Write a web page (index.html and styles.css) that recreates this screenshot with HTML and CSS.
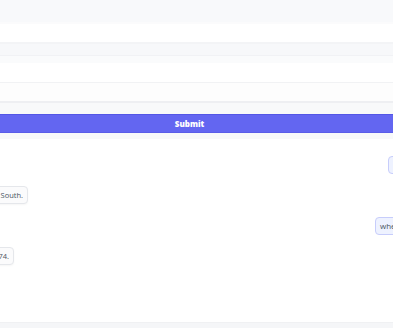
FILE: index.html
```html
<!DOCTYPE html>
<html>
<head>
<meta charset="utf-8">
<link rel="stylesheet" href="styles.css">
</head>
<body>
<div class="page">
  <div class="header"></div>
  <div class="field field-a"></div>
  <div class="band band-a"></div>
  <div class="band band-b"></div>
  <div class="field field-b"></div>
  <div class="field field-c"></div>
  <div class="band band-c"></div>
  <button class="submit">Submit</button>
  <div class="band band-d"></div>
  <div class="chat">
    <div class="row row-right row-first"><span class="bubble bubble-user">which state was the first to secede?</span></div>
    <div class="row row-left row-wide"><span class="bubble bubble-bot">South Carolina was the first state to secede from the Union, followed by others in the South.</span></div>
    <div class="row row-right row-second"><span class="bubble bubble-user">when did it happen?</span></div>
    <div class="row row-left row-narrow"><span class="bubble bubble-bot">It happened on December 20, 1874.</span></div>
  </div>
  <div class="footer"></div>
</div>
</body>
</html>
```

FILE: styles.css
```css
html, body {
  margin: 0;
  padding: 0;
  background: #ffffff;
  overflow: hidden;
}
body {
  font-family: "Open Sans", "Liberation Sans", sans-serif;
}
.page {
  display: flex;
  flex-direction: column;
  width: 393px;
  height: 328px;
}
.header {
  flex: none;
  height: 22px;
  background: #f8f9fb;
  border-bottom: 2px solid #fbfbfc;
}
.field {
  flex: none;
  background: #ffffff;
}
.band {
  flex: none;
}
.field-a {
  height: 18px;
  border-bottom: 2px solid #f3f4f6;
}
.band-a {
  height: 11px;
  background: #f7f8fa;
  border-bottom: 1px solid #f1f2f5;
}
.band-b {
  height: 7px;
  background: #fafbfc;
}
.field-b {
  height: 19px;
  border-bottom: 1px solid #f1f2f4;
}
.field-c {
  height: 18px;
  background: #fdfdfd;
  border-bottom: 2px solid #eeeff2;
}
.band-c {
  height: 11px;
  background: #f8f9fa;
}
.submit {
  flex: none;
  display: block;
  width: 100%;
  height: 19px;
  margin: 0;
  padding: 0 14px 0 0;
  border: 0;
  border-top: 1px solid #5457e6;
  border-bottom: 1px solid #5a5de8;
  background: #6366f1;
  color: #ffffff;
  font-family: "Open Sans", "Liberation Sans", sans-serif;
  font-weight: 800;
  font-size: 8px;
  line-height: 17px;
}
.band-d {
  height: 6px;
  background: #f8f9fa;
}
.chat {
  flex: 1;
  display: flex;
  flex-direction: column;
  gap: 12px;
  padding-top: 17px;
}
.row {
  display: flex;
  height: 18px;
}
.row-left {
  justify-content: flex-end;
}
.row-wide {
  width: 28px;
}
.row-narrow {
  width: 14px;
}
.row-right {
  justify-content: flex-start;
}
.row-first {
  margin-left: 388px;
}
.row-second {
  margin-left: 375px;
  margin-top: 1px;
}
.bubble {
  flex: none;
  white-space: nowrap;
  box-sizing: border-box;
  height: 18px;
  padding: 0 4px;
  border-radius: 4px;
  font-size: 7.5px;
  line-height: 16px;
  color: #4b5563;
}
.bubble-user {
  background: #eef2ff;
  border: 1px solid #c7cdfb;
  font-size: 8px;
}
.bubble-bot {
  background: #fbfbfc;
  border: 1px solid #e5e7eb;
  box-shadow: 0 1px 2px rgba(0,0,0,0.04);
}
.footer {
  flex: none;
  height: 5px;
  background: #f5f6f8;
  border-top: 1px solid #f0f1f3;
}
```
